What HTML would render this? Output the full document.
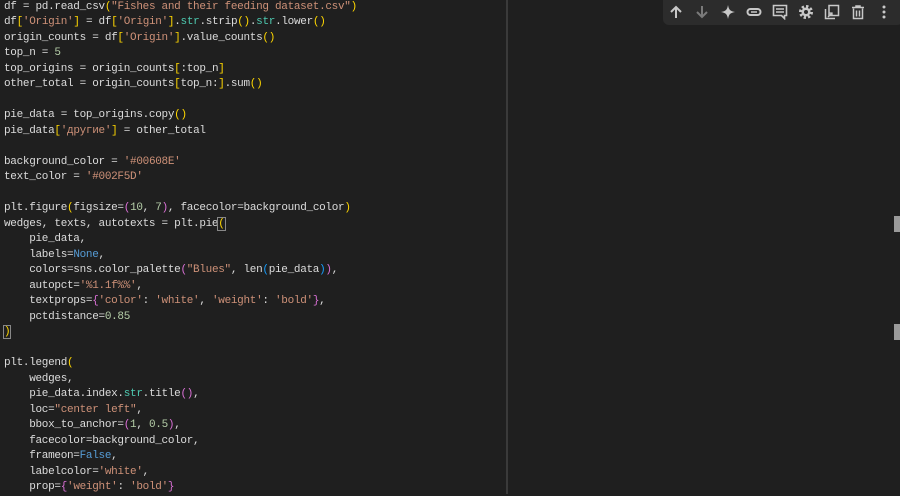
<!DOCTYPE html>
<html><head><meta charset="utf-8"><style>
html,body{margin:0;padding:0;}
body{width:900px;height:494px;background:#1f1f1f;overflow:hidden;position:relative;font-family:"Liberation Mono",monospace;font-size:11px;letter-spacing:-0.3px;color:#dcdcdc;}
.l{position:absolute;left:4px;height:15.5px;line-height:15.5px;white-space:pre;margin-top:0.5px}
.s{color:#ce9178}.k{color:#569cd6}.n{color:#b5cea8}.t{color:#4ec9b0}
.y{color:#ffd700}.p{color:#da70d6}.b{color:#179fff}
.div{position:absolute;left:506px;top:0;width:2px;height:494px;background:#3a3a3a}
.sb{position:absolute;left:894px;width:6px;height:16px;background:#9a9a9a}
.tb{position:absolute;left:663px;top:0;width:240px;height:25px;background:#2c2c2c;border-radius:0 0 6px 6px;}
.tb svg{position:absolute;top:4px}
</style></head><body>
<div class="l" style="top:-1px">df = pd.read_csv<span class="y">(</span><span class="s">"Fishes and their feeding dataset.csv"</span><span class="y">)</span></div>
<div class="l" style="top:14.5px">df<span class="y">[</span><span class="s">'Origin'</span><span class="y">]</span> = df<span class="y">[</span><span class="s">'Origin'</span><span class="y">]</span>.<span class="t">str</span>.strip<span class="y">()</span>.<span class="t">str</span>.lower<span class="y">()</span></div>
<div class="l" style="top:30px">origin_counts = df<span class="y">[</span><span class="s">'Origin'</span><span class="y">]</span>.value_counts<span class="y">()</span></div>
<div class="l" style="top:45.5px">top_n = <span class="n">5</span></div>
<div class="l" style="top:61px">top_origins = origin_counts<span class="y">[</span>:top_n<span class="y">]</span></div>
<div class="l" style="top:76.5px">other_total = origin_counts<span class="y">[</span>top_n:<span class="y">]</span>.sum<span class="y">()</span></div>
<div class="l" style="top:107.5px">pie_data = top_origins.copy<span class="y">()</span></div>
<div class="l" style="top:123px">pie_data<span class="y">[</span><span class="s">'другие'</span><span class="y">]</span> = other_total</div>
<div class="l" style="top:154px">background_color = <span class="s">'#00608E'</span></div>
<div class="l" style="top:169.5px">text_color = <span class="s">'#002F5D'</span></div>
<div class="l" style="top:200.5px">plt.figure<span class="y">(</span>figsize=<span class="p">(</span><span class="n">10</span>, <span class="n">7</span><span class="p">)</span>, facecolor=background_color<span class="y">)</span></div>
<div class="l" style="top:216px">wedges, texts, autotexts = plt.pie<span class="y" style="outline:1px solid #888">(</span></div>
<div class="l" style="top:231.5px">    pie_data,</div>
<div class="l" style="top:247px">    labels=<span class="k">None</span>,</div>
<div class="l" style="top:262.5px">    colors=sns.color_palette<span class="p">(</span><span class="s">"Blues"</span>, len<span class="b">(</span>pie_data<span class="b">)</span><span class="p">)</span>,</div>
<div class="l" style="top:278px">    autopct=<span class="s">'%1.1f%%'</span>,</div>
<div class="l" style="top:293.5px">    textprops=<span class="p">{</span><span class="s">'color'</span>: <span class="s">'white'</span>, <span class="s">'weight'</span>: <span class="s">'bold'</span><span class="p">}</span>,</div>
<div class="l" style="top:309px">    pctdistance=<span class="n">0.85</span></div>
<div class="l" style="top:324.5px"><span class="y" style="outline:1px solid #888">)</span></div>
<div class="l" style="top:355.5px">plt.legend<span class="y">(</span></div>
<div class="l" style="top:371px">    wedges,</div>
<div class="l" style="top:386.5px">    pie_data.index.<span class="t">str</span>.title<span class="p">()</span>,</div>
<div class="l" style="top:402px">    loc=<span class="s">"center left"</span>,</div>
<div class="l" style="top:417.5px">    bbox_to_anchor=<span class="p">(</span><span class="n">1</span>, <span class="n">0.5</span><span class="p">)</span>,</div>
<div class="l" style="top:433px">    facecolor=background_color,</div>
<div class="l" style="top:448.5px">    frameon=<span class="k">False</span>,</div>
<div class="l" style="top:464px">    labelcolor=<span class="s">'white'</span>,</div>
<div class="l" style="top:479.5px">    prop=<span class="p">{</span><span class="s">'weight'</span>: <span class="s">'bold'</span><span class="p">}</span></div>
<div class="div"></div>
<div class="sb" style="top:216px"></div>
<div class="sb" style="top:324px"></div>
<div class="tb">
<svg style="left:5px" width="16" height="16" viewBox="0 0 16 16"><path d="M8 14V3M3 8l5-5 5 5" stroke="#c8c8c8" stroke-width="2" fill="none"/></svg>
<svg style="left:31px" width="16" height="16" viewBox="0 0 16 16"><path d="M8 2v11M3 8l5 5 5-5" stroke="#7a7a7a" stroke-width="2" fill="none"/></svg>
<svg style="left:57px" width="16" height="16" viewBox="0 0 16 16"><path d="M8 1C9 6 10 7 15 8 10 9 9 10 8 15 7 10 6 9 1 8 6 7 7 6 8 1Z" fill="#c8c8c8"/></svg>
<svg style="left:83px" width="16" height="16" viewBox="0 0 16 16"><rect x="1.5" y="5" width="13" height="6" rx="3" stroke="#c8c8c8" stroke-width="2" fill="none"/><path d="M5 8h6" stroke="#c8c8c8" stroke-width="1.5"/></svg>
<svg style="left:109px" width="16" height="16" viewBox="0 0 16 16"><path d="M1.5 1.5h13v10h-2v3l-3-3h-8z" stroke="#c8c8c8" stroke-width="1.6" fill="none"/><path d="M4 5h8M4 8h8" stroke="#c8c8c8" stroke-width="1.4"/></svg>
<svg style="left:135px" width="16" height="16" viewBox="0 0 16 16"><circle cx="8" cy="8" r="5.5" fill="none" stroke="#c8c8c8" stroke-width="3" stroke-dasharray="2.3 2"/><circle cx="8" cy="8" r="4.5" fill="#c8c8c8"/><circle cx="8" cy="8" r="2" fill="#2c2c2c"/></svg>
<svg style="left:161px" width="16" height="16" viewBox="0 0 16 16"><path d="M5 1.5h9.5v10H5zM1.5 5v9.5H11" stroke="#c8c8c8" stroke-width="1.5" fill="none"/><path d="M4 13l4-4M5 9h3v3" stroke="#c8c8c8" stroke-width="1.3" fill="none"/></svg>
<svg style="left:187px" width="16" height="16" viewBox="0 0 16 16"><path d="M2 3.5h12M6 3.5V2h4v1.5M3.5 4.5v10h9v-10M6.5 6.5v6M9.5 6.5v6" stroke="#c8c8c8" stroke-width="1.5" fill="none"/></svg>
<svg style="left:213px" width="16" height="16" viewBox="0 0 16 16"><circle cx="8" cy="3" r="1.5" fill="#c8c8c8"/><circle cx="8" cy="8" r="1.5" fill="#c8c8c8"/><circle cx="8" cy="13" r="1.5" fill="#c8c8c8"/></svg>
</div>
</body></html>
